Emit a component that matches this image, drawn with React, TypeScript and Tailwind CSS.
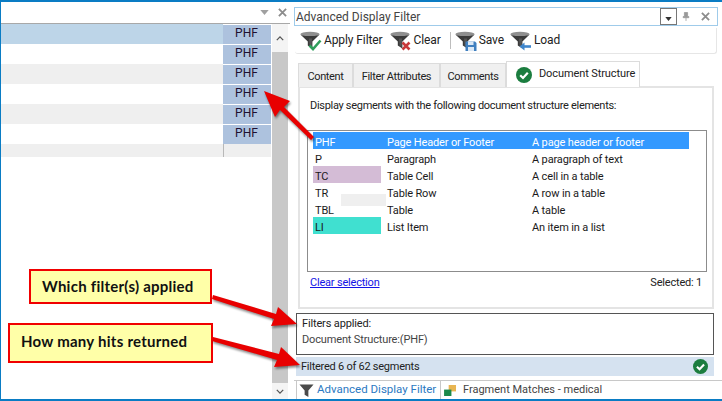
import React from "react";

const FONT = "font-['Roboto','Noto_Sans',sans-serif]";

function Funnel({ children, className = "" }: { children?: React.ReactNode; className?: string }) {
  return (
    <svg viewBox="0 0 22 20" className={`w-[22px] h-[20px] shrink-0 ${className}`}>
      <ellipse cx="10" cy="3.2" rx="9.6" ry="2.4" fill="#8f8f8f" />
      <path d="M0.4 3.4C3 5.6 17 5.6 19.6 3.4L12.4 10.6V17.4L7.8 14.6V10.6Z" fill="#3a3a3a" />
      <path d="M9 7.5H12L11.6 16L9.6 14.8Z" fill="#555" />
      {children}
    </svg>
  );
}

const Check = (
  <path d="M9.5 14.5L13 18L20.5 9.5" fill="none" stroke="#2f9e5b" strokeWidth="2.6" />
);
const Cross = (
  <path d="M12.5 11.5L19.5 18.5M19.5 11.5L12.5 18.5" fill="none" stroke="#c8393a" strokeWidth="2.6" />
);
const Floppy = (
  <g>
    <path d="M10.5 10.5H20L21.5 12V20H10.5Z" fill="#3f7fbf" />
    <rect x="13" y="10.5" width="5.5" height="3.5" fill="#dbe8f5" />
    <rect x="13" y="16" width="6" height="4" fill="#dbe8f5" />
  </g>
);
const LoadArrow = (
  <g>
    <path d="M21 15.5H13" stroke="#3f86cc" strokeWidth="2.6" fill="none" />
    <path d="M9.5 15.5L14.5 11.5V19.5Z" fill="#3f86cc" />
  </g>
);

function GreenCheck({ size }: { size: string }) {
  return (
    <svg viewBox="0 0 16 16" className={`${size} shrink-0`}>
      <circle cx="8" cy="8" r="8" fill="#1b7d3f" />
      <path d="M4.2 8.2L7 11L11.8 5.8" fill="none" stroke="#fff" strokeWidth="2.2" />
    </svg>
  );
}

function ToolButton({ icon, label, className = "" }: { icon: React.ReactNode; label: string; className?: string }) {
  return (
    <div className={`flex items-center gap-[2px] ${className}`}>
      <Funnel>{icon}</Funnel>
      <span className="text-[12px] leading-[16px] text-[#222] whitespace-nowrap tracking-[-0.1px] pb-px">{label}</span>
    </div>
  );
}

const rows = [
  { bg: "bg-[#bdd5e8]" },
  { bg: "bg-white" },
  { bg: "bg-[#efefef]" },
  { bg: "bg-white" },
  { bg: "bg-[#efefef]" },
  { bg: "bg-white" },
];

const structure = [
  { code: "PHF", name: "Page Header or Footer", desc: "A page header or footer", cell: "", row: "bg-[#3399ff] text-white" },
  { code: "P", name: "Paragraph", desc: "A paragraph of text", cell: "", row: "text-[#1a1a1a]" },
  { code: "TC", name: "Table Cell", desc: "A cell in a table", cell: "bg-[#d4bcd6]", row: "text-[#1a1a1a]" },
  { code: "TR", name: "Table Row", desc: "A row in a table", cell: "", row: "text-[#1a1a1a]" },
  { code: "TBL", name: "Table", desc: "A table", cell: "", row: "text-[#1a1a1a]" },
  { code: "LI", name: "List Item", desc: "An item in a list", cell: "bg-[#40e0d0]", row: "text-[#1a1a1a]" },
];

function Tab({ label, w }: { label: string; w: string }) {
  return (
    <div className={`${w} h-[24px] mt-[2px] bg-[#f0f0f0] border border-b-0 border-[#dcdcdc] flex items-center justify-center pt-[3px] whitespace-nowrap text-[11px] tracking-[-0.35px] text-[#222]`}>
      {label}
    </div>
  );
}

export default function App() {
  return (
    <div className={`relative w-[722px] h-[401px] bg-white border-t-2 border-l border-b-2 border-[#0a7cc4] flex overflow-hidden ${FONT}`}>
      {/* left pane */}
      <div className="w-[289px] shrink-0 flex flex-col">
        <div className="h-[21px] shrink-0 flex items-center justify-end gap-[9px] pr-[1px]">
          <svg viewBox="0 0 10 6" className="w-[9px] h-[5px]"><path d="M0 0H10L5 6Z" fill="#a0a0a0" /></svg>
          <svg viewBox="0 0 10 10" className="w-[9px] h-[9px] mr-[2px]"><path d="M1 1L9 9M9 1L1 9" stroke="#8c8c8c" strokeWidth="2" /></svg>
        </div>
        <div className="flex-1 flex min-h-0 border-t border-[#a8a8a8]">
          <div className="w-[270px] shrink-0 flex flex-col">
            {rows.map((r, i) => (
              <div key={i} className={`h-[20px] shrink-0 flex ${r.bg}`}>
                <div className="flex-1" />
                <div className="w-[48px] bg-[#adc2de] border-t border-white flex items-center justify-center pb-[3px] pr-[1px] text-[12px] text-[#201030]">PHF</div>
              </div>
            ))}
            <div className="h-[13px] shrink-0 flex bg-[#efefef]">
              <div className="flex-1" />
              <div className="w-[48px] border-l border-[#b8b8b8]" />
            </div>
          </div>
          <div className="w-[16px] ml-[1px] shrink-0 flex flex-col bg-[#c8c8c8]">
            <div className="h-[28px] bg-[#f4f4f4] flex items-center justify-center">
              <svg viewBox="0 0 10 6" className="w-[8px] h-[5px]"><path d="M1 5L5 1L9 5" fill="none" stroke="#555" strokeWidth="1.6" /></svg>
            </div>
            <div className="flex-1" />
            <div className="h-[16px] bg-[#f4f4f4] flex items-center justify-center">
              <svg viewBox="0 0 10 6" className="w-[8px] h-[5px]"><path d="M1 1L5 5L9 1" fill="none" stroke="#555" strokeWidth="1.6" /></svg>
            </div>
          </div>
        </div>
      </div>

      {/* right pane */}
      <div className="w-[427px] ml-[5px] shrink-0 flex flex-col pt-[5px]">
        <div className="h-[19px] -ml-px mr-[4px] shrink-0 flex items-center border border-[#9fcbea] pl-[1px] pr-[7px] text-[12px] text-[#444]">
          <span className="flex-1">Advanced Display Filter</span>
          <div className="w-[17px] h-[17px] border border-[#777] flex items-end justify-center pb-[3px] mr-[5px]">
            <svg viewBox="0 0 8 5" className="w-[7px] h-[4px]"><path d="M0 0H8L4 5Z" fill="#333" /></svg>
          </div>
          <svg viewBox="0 0 10 12" className="w-[8px] h-[11px] mr-[11px]"><path d="M3 1H7V6H8.5V7.5H1.5V6H3ZM5 7.5V11.5" fill="#999" stroke="#999" strokeWidth="1" /></svg>
          <svg viewBox="0 0 10 10" className="w-[9px] h-[9px]"><path d="M1 1L9 9M9 1L1 9" stroke="#8c8c8c" strokeWidth="2" /></svg>
        </div>

        <div className="h-[26px] mt-[2px] shrink-0 flex items-center pl-[5px] border-b border-r border-[#e6e6e6] rounded-b-[3px] mr-[5px]">
          <ToolButton icon={Check} label="Apply Filter" />
          <ToolButton icon={Cross} label="Clear" className="ml-[7px]" />
          <div className="w-px h-[17px] bg-[#bdbdbd] ml-[9px] mr-[4px]" />
          <ToolButton icon={Floppy} label="Save" />
          <ToolButton icon={LoadArrow} label="Load" className="ml-[6px]" />
        </div>

        <div className="flex h-[26px] mt-[7px] shrink-0 ml-[3px] relative z-10">
          <Tab label="Content" w="w-[55px]" />
          <Tab label="Filter Attributes" w="w-[87px]" />
          <Tab label="Comments" w="w-[66px]" />
          <div className="w-[134px] h-[26px] bg-white border border-b-0 border-[#dcdcdc] flex items-center pl-[9px] gap-[7px] whitespace-nowrap text-[11px] tracking-[-0.1px] text-[#222]">
            <GreenCheck size="w-[16px] h-[16px]" />
            <span>Document Structure</span>
          </div>
        </div>

        <div className="h-[223px] ml-[3px] mr-[8px] shrink-0 border-[2px] border-[#e4e4e4] -mt-px flex flex-col pl-[7px]">
          <div className="text-[11px] text-[#222] pt-[10px] pl-[3px] h-[42px] shrink-0 leading-[16px] tracking-[-0.3px] whitespace-nowrap">
            Display segments with the following document structure elements:
          </div>
          <div className="h-[142px] w-[400px] shrink-0 border border-[#8c8c8c] pt-[1px] pl-[5px] relative">
            <div className="absolute left-[33px] top-[63px] w-[45px] h-[12px] bg-[#efefef]" />
            {structure.map((s) => (
              <div key={s.code} className={`relative h-[17px] flex w-[376px] text-[11px] leading-[17px] tracking-[-0.15px] ${s.row}`}>
                <div className={`w-[68px] h-[17px] pl-[2px] pt-[2px] ${s.cell}`}>{s.code}</div>
                <div className="w-[151px] pl-[6px] pt-[2px]">{s.name}</div>
                <div className="pt-[2px]">{s.desc}</div>
              </div>
            ))}
          </div>
          <div className="flex justify-between items-center h-[18px] mt-[2px] pl-[3px] pr-[5px] w-[400px] text-[11px] tracking-[-0.2px]">
            <span className="text-[#1414e6] underline">Clear selection</span>
            <span className="text-[#222]">Selected: 1</span>
          </div>
        </div>

        <div className="h-[42px] mt-[4px] ml-[1px] mr-[8px] shrink-0 border border-[#555] pl-[5px] pt-[2px] text-[11px] leading-[16px] tracking-[-0.15px]">
          <div className="text-[#222]">Filters applied:</div>
          <div className="text-[#444]">Document Structure:(PHF)</div>
        </div>
        <div className="h-[19px] mt-[2px] ml-[1px] mr-[8px] shrink-0 bg-[#d5e2f0] flex items-center justify-between pl-[5px] pr-[6px] text-[11px] tracking-[-0.25px] text-[#222]">
          <span className="pt-[2px]">Filtered 6 of 62 segments</span>
          <GreenCheck size="w-[15px] h-[15px]" />
        </div>

        <div className="flex-1 flex mt-[4px] border-t border-[#c8c8c8] -ml-px min-h-0">
          <div className="w-[145px] -mt-px ml-[2px] border border-b-0 border-[#c8c8c8] bg-white flex items-center pl-[2px] gap-[3px] whitespace-nowrap text-[11.5px] text-[#2b79c2]">
            <svg viewBox="0 0 16 16" className="w-[15px] h-[15px]"><path d="M0.5 1.5H15.5L10 8V15L6 12.5V8Z" fill="#4a4a4a" /></svg>
            <span>Advanced Display Filter</span>
          </div>
          <div className="flex items-center pl-[3px] whitespace-nowrap text-[11px] text-[#444]">
            <svg viewBox="0 0 14 12" className="w-[13px] h-[11px] mr-[6px]"><rect x="5" y="0" width="8" height="7" fill="#e8b552" /><rect x="0" y="5" width="8" height="7" fill="#1b8a4b" /></svg>
            <span>Fragment Matches - medical</span>
          </div>
        </div>
      </div>

      {/* callouts */}
      <div className="absolute left-[28px] top-[267px] w-[183px] h-[35px] border-[2px] border-[#f00000] bg-[#ffffa8] flex items-center pl-[11px] text-[15px] tracking-[0.25px] font-bold text-[#111] font-['Lato',sans-serif]">
        Which filter(s) applied
      </div>
      <div className="absolute left-[7px] top-[321px] w-[205px] h-[40px] border-[2px] border-[#f00000] bg-[#ffffa8] flex items-center pl-[11px] pb-[4px] text-[15px] tracking-[0.25px] font-bold text-[#111] font-['Lato',sans-serif]">
        How many hits returned
      </div>

      {/* arrows */}
      <svg viewBox="0 0 722 401" className="absolute -left-px -top-[2px] w-[722px] h-[401px] pointer-events-none">
        <g fill="#e80000" style={{ filter: "drop-shadow(1px 2px 1px rgba(0,0,0,0.45))" }}>
          <path d="M264 91L290 101L284 107L314 137L311 140L280 110L275 117Z" />
          <path d="M297 324L271 326L274 319L212 299L213 295L276 314L278 307Z" />
          <path d="M300 365L274 367L277 360L212 341L213 337L279 354L281 347Z" />
        </g>
      </svg>
    </div>
  );
}
